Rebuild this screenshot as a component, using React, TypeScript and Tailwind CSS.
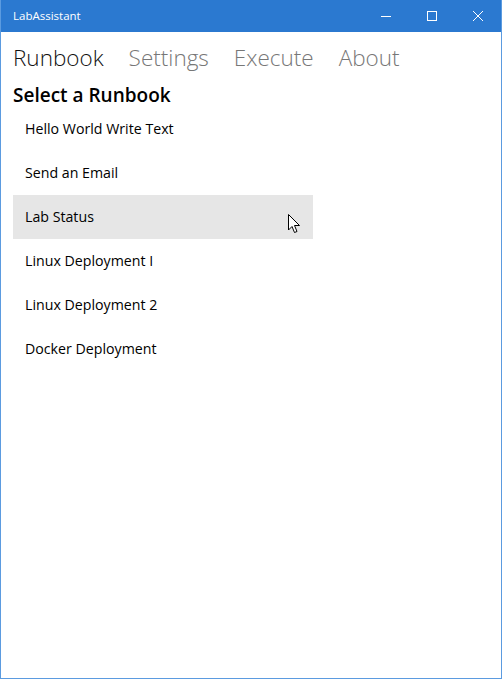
import React from 'react';

const items = ['Hello World Write Text', 'Send an Email', 'Lab Status', 'Linux Deployment I', 'Linux Deployment 2', 'Docker Deployment'];
const tabs = ['Runbook', 'Settings', 'Execute', 'About'];

const Cursor = () => (
    <svg width="13" height="20" viewBox="0 0 13 20" className="absolute left-[287px] top-[214px]">
        <path d="M0.5 0.5 L0.5 16 L4 12.5 L6.5 18.5 L9 17.5 L6.5 11.5 L11.5 11.5 Z" fill="#fff" stroke="#000" strokeWidth="1" strokeLinejoin="miter" />
    </svg>
);

const TitleBar = () => (
    <div className="h-8 bg-[#2b79d0] flex items-center text-white shrink-0">
        <span className="pl-[12px] text-[11.5px] flex-1">LabAssistant</span>
        <div className="flex h-full">
            <div className="w-[46px] flex items-center justify-center">
                <div className="w-[10px] h-px bg-white" />
            </div>
            <div className="w-[46px] flex items-center justify-center">
                <div className="w-[10px] h-[10px] border border-white" />
            </div>
            <div className="w-[46px] flex items-center justify-center">
                <svg width="10" height="10" viewBox="0 0 10 10">
                    <path d="M0 0 L10 10 M10 0 L0 10" stroke="#fff" strokeWidth="1" />
                </svg>
            </div>
        </div>
    </div>
);

export default function App() {
    return (
        <div className="relative w-[502px] h-[679px] flex flex-col bg-white border-x border-b border-[#5b9be0] overflow-hidden" style={{ fontFamily: '"Open Sans", "Noto Sans", sans-serif' }}>
            <TitleBar />
            <div className="px-[12px] flex flex-col">
                <div className="flex gap-[25px] pt-[4px] h-[48px] items-center">
                    {tabs.map((t, i) => (
                        <span key={t} className={`text-[22.5px] font-light ${i === 0 ? 'text-[#111]' : 'text-[#777]'}`}>{t}</span>
                    ))}
                </div>
                <div className="text-[19px] font-semibold text-black h-[27px] leading-[27px] pt-[2px]">Select a Runbook</div>
                <ul className="w-[300px]">
                    {items.map(item => (
                        <li key={item} className={`h-[44px] flex items-center px-[12px] text-[14.2px] text-black ${item === 'Lab Status' ? 'bg-[#e6e6e6]' : ''}`}>{item}</li>
                    ))}
                </ul>
            </div>
            <Cursor />
        </div>
    );
}
